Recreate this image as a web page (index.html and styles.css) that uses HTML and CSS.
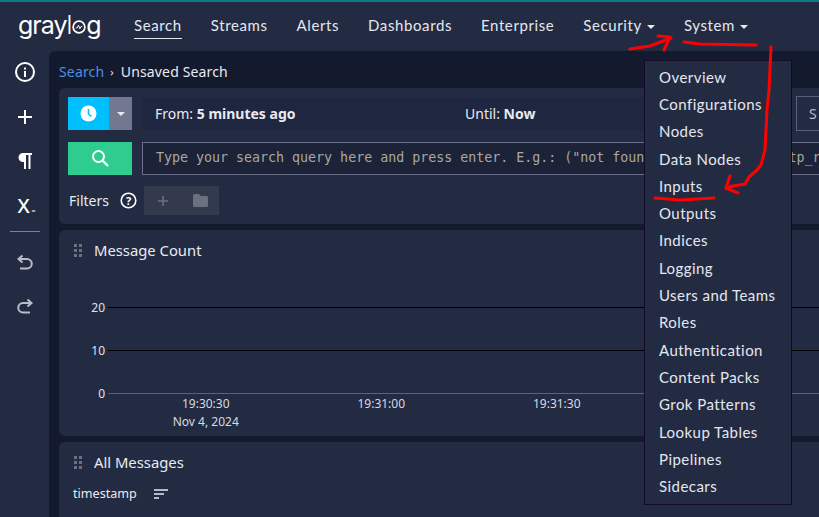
FILE: index.html
```html
<!DOCTYPE html>
<html lang="en">
<head>
    <meta charset="UTF-8">
    <title>Graylog - Search</title>
    <link rel="stylesheet" href="styles.css">
</head>
<body>

<header class="navbar">
    <div class="logo">gray<span class="logo-l">l</span><span class="logo-o"><svg width="14" height="14" viewBox="0 0 15 15"><circle cx="7.500" cy="7.500" r="6.300" fill="none" stroke="#fff" stroke-width="1.800"/><path d="M4 8.500h1.500l1.500-3 1.400 4 1.200-2.500H11" fill="none" stroke="#fff" stroke-width="1"/></svg></span>g</div>
    <nav class="nav-links">
        <a class="nav-link active">Search</a>
        <a class="nav-link">Streams</a>
        <a class="nav-link">Alerts</a>
        <a class="nav-link">Dashboards</a>
        <a class="nav-link">Enterprise</a>
        <a class="nav-link">Security <i class="caret"></i></a>
        <a class="nav-link">System <i class="caret"></i></a>
    </nav>
</header>

<div class="page">
    <aside class="sidebar">
        <svg class="side-icon info" width="22" height="22" viewBox="0 0 22 22"><circle cx="11" cy="11" r="9" fill="none" stroke="#fff" stroke-width="2"/><rect x="10" y="10" width="2" height="6" fill="#fff"/><rect x="10" y="6.500" width="2" height="2" fill="#fff"/></svg>
        <svg class="side-icon plus" width="16" height="16" viewBox="0 0 16 16"><path d="M8 1v14M1 8h14" stroke="#fff" stroke-width="2"/></svg>
        <svg class="side-icon para" width="16" height="18" viewBox="0 0 16 18"><path d="M7 17V10H6a4.500 4.500 0 0 1 0-9h9v2h-1.500v14h-2V3H9v14z" fill="#fff"/></svg>
        <div class="side-sub">X<small>=</small></div>
        <hr class="side-rule">
        <svg class="side-icon undo" width="18" height="18" viewBox="0 0 18 18"><path d="M6.500 1.500 2.500 5l4 3.500M2.500 5h8.500a4.500 4.500 0 0 1 0 9.500H4" fill="none" stroke="#b9bdc7" stroke-width="2"/></svg>
        <svg class="side-icon redo" width="18" height="18" viewBox="0 0 18 18"><path d="M11.500 1.500 15.500 5l-4 3.500M15.500 5H7a4.500 4.500 0 0 0 0 9.500h7" fill="none" stroke="#b9bdc7" stroke-width="2"/></svg>
    </aside>

    <main class="content">
        <div class="breadcrumb">
            <a>Search</a><span class="crumb-sep">›</span><span>Unsaved Search</span>
        </div>

        <section class="card search-card">
            <div class="search-row">
                <div class="time-btn">
                    <span class="clock"><svg width="17" height="17" viewBox="0 0 17 17"><circle cx="8.500" cy="8.500" r="8" fill="#fff"/><path d="M8.500 4v5l3 2.500" fill="none" stroke="#00bfff" stroke-width="1.600"/></svg></span>
                    <span class="clock-drop"><i class="caret"></i></span>
                </div>
                <div class="range">
                    <span class="range-from">From: <b>5 minutes ago</b></span>
                    <span class="range-until">Until: <b>Now</b></span>
                </div>
                <div class="streams-box">S</div>
            </div>
            <div class="search-row">
                <div class="go-btn"><svg width="19" height="19" viewBox="0 0 19 19"><circle cx="7.500" cy="7.500" r="5.500" fill="none" stroke="#fff" stroke-width="2"/><path d="M11.500 11.500 17 17" stroke="#fff" stroke-width="2.400"/></svg></div>
                <div class="query">Type your search query here and press enter. E.g.: ("not found" AND http) OR http_response_code:[400 TO 404]</div>
            </div>
            <div class="filters">
                <span>Filters</span>
                <svg width="17" height="17" viewBox="0 0 17 17"><circle cx="8.500" cy="8.500" r="7.300" fill="none" stroke="#fff" stroke-width="1.600"/><text x="8.500" y="12.500" text-anchor="middle" class="help-mark">?</text></svg>
                <div class="filter-btns">
                    <svg width="12" height="12" viewBox="0 0 12 12"><path d="M6 1v10M1 6h10" stroke="#6b7080" stroke-width="1.600"/></svg>
                    <svg width="15" height="13" viewBox="0 0 15 13"><path d="M1.500 0H6l1.500 2h6A1.500 1.500 0 0 1 15 3.500v8a1.500 1.500 0 0 1-1.500 1.500h-12A1.500 1.500 0 0 1 0 11.500v-10A1.500 1.500 0 0 1 1.500 0z" fill="#6b7080"/></svg>
                </div>
            </div>
        </section>

        <section class="card chart-card">
            <div class="card-title"><i class="grip"></i>Message Count</div>
            <div class="chart">
                <div class="grid-row"><span>20</span><i></i></div>
                <div class="grid-row"><span>10</span><i></i></div>
                <div class="grid-row row-0"><span>0</span><i></i></div>
                <div class="ticks">
                    <div class="tick">19:30:30<br>Nov 4, 2024</div>
                    <div class="tick">19:31:00</div>
                    <div class="tick">19:31:30</div>
                </div>
            </div>
        </section>

        <section class="card table-card">
            <div class="card-title"><i class="grip"></i>All Messages</div>
            <div class="col-head">timestamp
                <svg width="14" height="10" viewBox="0 0 14 10"><path d="M0 1h14M0 5h10M0 9h5" stroke="#e6e8ee" stroke-width="1.400"/></svg>
            </div>
        </section>
    </main>
</div>

<ul class="menu">
    <li>Overview</li>
    <li>Configurations</li>
    <li>Nodes</li>
    <li>Data Nodes</li>
    <li>Inputs</li>
    <li>Outputs</li>
    <li>Indices</li>
    <li>Logging</li>
    <li>Users and Teams</li>
    <li>Roles</li>
    <li>Authentication</li>
    <li>Content Packs</li>
    <li>Grok Patterns</li>
    <li>Lookup Tables</li>
    <li>Pipelines</li>
    <li>Sidecars</li>
</ul>

<!-- red marker scribbles on top of the screenshot -->
<svg class="scribble" width="819" height="517" viewBox="0 0 819 517">
    <g fill="none" stroke="#f00" stroke-width="3" stroke-linecap="round" stroke-linejoin="round">
        <path d="M630 49 650 46 671 38"/>
        <path d="M658 36 670 37 664 50"/>
        <path d="M684 42 700 44 756 45"/>
        <path d="M771 47 769 90 767 110 766 130 765 150 761 165 757 170 749 177 745 184 733 186 726 188"/>
        <path d="M730 176 726 188 738 193"/>
        <path d="M655 198 680 200 714 198"/>
    </g>
</svg>

</body>
</html>
```

FILE: styles.css
```css
* {
    box-sizing: border-box;
}

html, body {
    height: 517px;
    overflow: hidden;
}

body {
    margin: 0;
    background: #232b42;
    color: #e8eaf0;
    font-family: "Noto Sans", "Open Sans", sans-serif;
    font-size: 14px;
    border-top: 2px solid #0f7a85;
}

/* top bar */
.navbar {
    display: flex;
    align-items: center;
    height: 49px;
    padding-bottom: 4px;
}

.logo {
    width: 134px;
    padding-left: 18px;
    display: flex;
    align-items: center;
    color: #fff;
    font-family: "Inter", sans-serif;
    font-size: 25px;
    font-weight: 400;
    letter-spacing: -1px;
}

.logo-l {
    font-weight: 300;
}

.logo-o {
    display: flex;
    margin: 4px 0 0 1px;
}

.nav-links {
    display: flex;
    gap: 29px;
}

.nav-link {
    padding: 6px 0 4px;
    color: #e3e7f0;
    font-family: "Lato", sans-serif;
    font-size: 15px;
    letter-spacing: 0.6px;
    border-bottom: 1px solid transparent;
}

.nav-link.active {
    border-bottom-color: #e3e7f0;
}

.caret {
    display: inline-block;
    margin-left: 1px;
    vertical-align: middle;
    border-top: 4px solid #e8eaf0;
    border-left: 4px solid transparent;
    border-right: 4px solid transparent;
}

.page {
    display: flex;
    height: 466px;
}

/* left icons */
.sidebar {
    width: 49px;
    flex: none;
    display: flex;
    flex-direction: column;
    align-items: center;
}

.info {
    margin-top: 10px;
}

.plus {
    margin-top: 26px;
}

.para {
    margin-top: 27px;
}

.side-sub {
    margin-top: 24px;
    height: 23px;
    padding-left: 4px;
    color: #fff;
    font-size: 20px;
    font-weight: 500;
    line-height: 23px;
}

.side-sub small {
    margin-left: 2px;
    font-size: 7px;
}

.side-rule {
    width: 30px;
    margin: 14px 0 0;
    border: 0;
    border-top: 1px solid #7d8291;
}

.undo {
    margin-top: 22px;
}

.redo {
    margin-top: 26px;
}

/* main area */
.content {
    flex: 1;
    min-width: 0;
    padding: 0 0 0 10px;
    background: #141a2d;
    border-top-left-radius: 6px;
    overflow: hidden;
}

.breadcrumb {
    display: flex;
    align-items: center;
    height: 37px;
    padding-top: 4px;
    color: #e8eaf0;
    font-size: 14px;
    letter-spacing: 0.15px;
}

.breadcrumb a {
    color: #4a90e2;
}

.crumb-sep {
    margin: 0 7px 0 6px;
    font-size: 11px;
}

.card {
    width: 900px;
    margin-bottom: 6px;
    background: #232b42;
    border-radius: 6px;
}

.search-card {
    height: 136px;
    padding: 9px 9px;
}

.search-row {
    display: flex;
    margin-bottom: 12px;
    height: 33px;
}

.time-btn {
    display: flex;
    width: 64px;
    flex: none;
}

.clock {
    display: flex;
    align-items: center;
    justify-content: center;
    width: 41px;
    background: #00bfff;
}

.clock-drop {
    display: flex;
    align-items: center;
    justify-content: center;
    width: 23px;
    background: #727890;
}

.range {
    display: flex;
    align-items: center;
    width: 650px;
    margin-left: 10px;
    padding-left: 13px;
    background: #1f2640;
    font-size: 14px;
}

.range b {
    font-weight: 700;
}

.range-from {
    width: 310px;
}

.streams-box {
    display: flex;
    align-items: center;
    width: 60px;
    height: 35px;
    margin-top: -1px;
    margin-left: 4px;
    padding-left: 12px;
    border: 1px solid #5a6075;
    color: #b9bdc7;
}

.go-btn {
    display: flex;
    align-items: center;
    justify-content: center;
    width: 64px;
    flex: none;
    background: #2ecc8f;
}

.query {
    flex: 1;
    margin-left: 10px;
    padding-left: 13px;
    background: #1c2238;
    border: 1px solid #6c6f8c;
    color: #a9a89e;
    font-family: "DejaVu Sans Mono", monospace;
    font-size: 13.300px;
    line-height: 29px;
    white-space: nowrap;
    overflow: hidden;
}

.filters {
    display: flex;
    align-items: center;
    gap: 11px;
    height: 29px;
    margin-top: -1px;
    padding-left: 1px;
    font-size: 14px;
}

.help-mark {
    fill: #fff;
    font-family: "Noto Sans", sans-serif;
    font-size: 11px;
    font-weight: 700;
}

.filter-btns {
    display: flex;
    align-items: center;
    gap: 24px;
    height: 29px;
    padding: 0 11px 0 13px;
    margin-left: -4px;
    background: #343a4e;
}

.card-title {
    display: flex;
    align-items: center;
    height: 42px;
    padding: 0 0 2px 14px;
    font-size: 14.800px;
    color: #e8eaf0;
}

.grip {
    width: 10px;
    height: 14px;
    margin-right: 11px;
    background-image: radial-gradient(circle, #6b7080 1.600px, transparent 1.700px);
    background-size: 5px 5px;
}

.chart-card {
    height: 206px;
}

.chart {
    padding-top: 14px;
    font-size: 12px;
    color: #e0e2e8;
}

.grid-row {
    display: flex;
    align-items: center;
    height: 43px;
}

.grid-row span {
    width: 49px;
    padding-right: 3px;
    text-align: right;
}

.grid-row i {
    flex: 1;
    border-top: 1px solid #000;
}

.row-0 i {
    border-top-color: #60636f;
}

.ticks {
    display: flex;
    margin-top: -20px;
    padding-left: 59px;
    line-height: 18px;
    color: #d7d9e0;
}

.tick {
    width: 175.500px;
    text-align: center;
}

.table-card {
    height: 90px;
    margin-bottom: 0;
}

.col-head {
    display: flex;
    align-items: center;
    gap: 17px;
    padding-left: 14px;
    font-size: 12.600px;
    margin-top: 1px;
}

/* dropdown of System */
.menu {
    position: absolute;
    top: 60px;
    left: 644px;
    width: 148px;
    height: 445px;
    margin: 0;
    padding: 2.700px 0;
    list-style: none;
    background: #232b42;
    border: 1px solid #120c2a;
    color: #e3e7f0;
    font-family: "Lato", sans-serif;
    font-size: 15px;
    letter-spacing: 0.45px;
}

.menu li {
    height: 27.300px;
    padding-left: 14px;
    line-height: 27px;
}

.scribble {
    position: absolute;
    top: 0;
    left: 0;
}
```
